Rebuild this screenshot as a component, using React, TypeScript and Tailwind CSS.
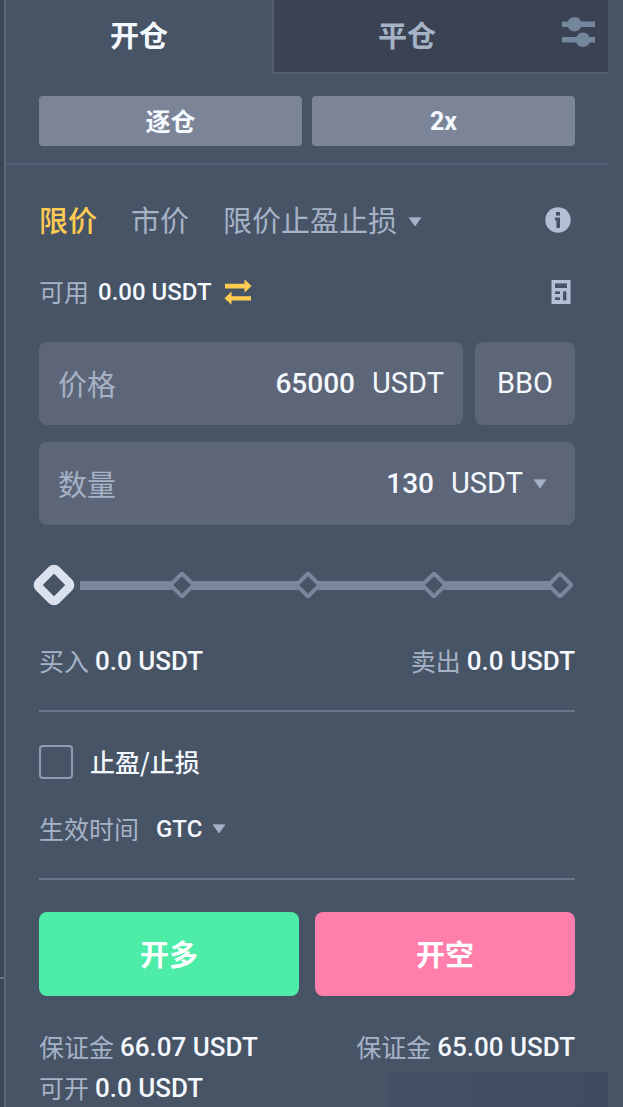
import { useState } from "react";
import clsx from "clsx";

const ORDER_TYPES = ["限价", "市价", "限价止盈止损"];
const STOPS = [0, 25, 50, 75, 100];

// CJK first, so Chinese labels get their own line metrics
const ZH = "font-['Noto_Sans_CJK_SC',sans-serif]";

function Caret({ className }: { className?: string }) {
  return (
    <svg width="14" height="10" viewBox="0 0 14 10" fill="currentColor" className={clsx("shrink-0 pointer-events-none", className)}>
      <path d="M1.2 0.8h11.6L7 9z" stroke="currentColor" strokeWidth="0.8" strokeLinejoin="round" />
    </svg>
  );
}

function SlidersIcon() {
  return (
    <svg width="33" height="32" viewBox="0 0 33 32" fill="currentColor">
      <rect x="0" y="5.5" width="33" height="5.5" />
      <circle cx="12.5" cy="8.2" r="7.2" />
      <rect x="0" y="21" width="33" height="5.5" />
      <circle cx="21" cy="23.8" r="7.2" />
    </svg>
  );
}

function InfoIcon() {
  return (
    <svg width="26" height="26" viewBox="0 0 26 26">
      <circle cx="13" cy="13" r="12.7" fill="currentColor" />
      <rect x="11" y="5" width="4" height="3.6" fill="#475466" />
      <path d="M10 10.6h5v10.4h-3.6v-7.6H10z" fill="#475466" />
    </svg>
  );
}

function CalculatorIcon() {
  return (
    <svg width="20" height="24" viewBox="0 0 20 24">
      <rect x="0.5" y="0" width="19" height="24" rx="0.5" fill="currentColor" />
      <g fill="#475466">
        <rect x="4" y="3.4" width="12" height="4.6" />
        <rect x="4" y="11.4" width="5" height="2.6" />
        <rect x="4" y="17.4" width="5" height="2.6" />
        <rect x="12" y="11.4" width="3.4" height="9" />
      </g>
    </svg>
  );
}

function TransferIcon() {
  return (
    <svg width="28" height="26" viewBox="0 0 28 26" fill="currentColor">
      <path d="M1 4.8h19.5V0.2L27.5 7l-7 6.8V9.4H1z" />
      <path d="M27 17.2H7.5v-4.6L0.5 19.2l7 6.6v-4.2H27z" />
    </svg>
  );
}

function Amount({ label, value }: { label: string; value: string }) {
  return (
    <div className="flex h-8 items-center gap-[6px]">
      <span className={clsx(ZH, "text-[25px] text-[#a6b2c6]")}>{label}</span>
      <span className="text-[26px] font-medium text-[#f4f8ff]">{value}</span>
    </div>
  );
}

function PercentSlider() {
  const [percent, setPercent] = useState(0);

  return (
    <div className="relative mt-[39px] h-[42px]">
      <div className="flex h-full items-center justify-between pr-[2px]">
        {STOPS.map((stop, i) => (
          <div key={stop} className={clsx("flex items-center", i > 0 && "flex-1")}>
            {i > 0 && <span className={clsx("h-[9px] flex-1 bg-[#7b869a]", i === 1 ? "ml-[11px] -mr-[3px]" : "-mx-[3px]")} />}
            {stop === percent ? (
              <svg width="42" height="42" viewBox="0 0 42 42" className="-mx-[6px] shrink-0">
                <rect x="8.75" y="8.75" width="24.5" height="24.5" rx="3" transform="rotate(45 21 21)" fill="#475466" stroke="#dbe2ed" strokeWidth="8.5" strokeLinejoin="round" />
              </svg>
            ) : (
              <svg width="26" height="28" viewBox="0 0 26 28" className="relative shrink-0">
                <rect x="4.8" y="5.8" width="16.4" height="16.4" rx="1" transform="rotate(45 13 14)" fill="#475466" stroke="#7b869a" strokeWidth="4" strokeLinejoin="round" />
              </svg>
            )}
          </div>
        ))}
      </div>
      <input
        type="range"
        aria-label="百分比"
        min={0}
        max={100}
        step={25}
        value={percent}
        onChange={(e) => setPercent(Number(e.target.value))}
        className="absolute inset-0 h-full w-full cursor-pointer opacity-0"
      />
    </div>
  );
}

export default function App() {
  const [tab, setTab] = useState("open");
  const [orderType, setOrderType] = useState("限价");
  const [price, setPrice] = useState("65000");
  const [size, setSize] = useState("130");
  const [tpsl, setTpsl] = useState(false);

  return (
    <div className="flex min-h-screen bg-[#475466] pr-[15px] font-[Roboto,'Noto_Sans_CJK_SC',sans-serif]">
      {/* Edge of the neighbouring panel */}
      <div className="flex w-[6px] shrink-0 flex-col border-r-2 border-[#5b6679] bg-[#3c4558]">
        <div className="h-[979px] border-b-2 border-[#6b768a]" />
      </div>

      <main className="relative min-w-0 flex-1">
        <div className="grid h-[74px] grid-cols-[266fr_336fr]" role="tablist">
          <button
            role="tab"
            aria-selected={tab === "open"}
            onClick={() => setTab("open")}
            className={clsx(ZH, "pb-[4px] text-[29px] font-bold text-[#f4f8ff]")}
          >
            开仓
          </button>
          <div className="flex items-center rounded-bl-[3px] border-b-2 border-l-2 border-[#525d70] bg-[#3a4253] pr-[13px]">
            <button
              role="tab"
              aria-selected={tab === "close"}
              onClick={() => setTab("close")}
              className={clsx(ZH, "h-full flex-1 pr-[22px] pb-[2px] text-[29px] font-bold text-[#a6b2c6]")}
            >
              平仓
            </button>
            <button aria-label="设置" className="pb-[8px] text-[#74869c]">
              <SlidersIcon />
            </button>
          </div>
        </div>

        <div className="grid grid-cols-2 gap-[10px] border-b-2 border-[#515d70] px-[33px] pt-[22px] pb-[17px]">
          <button className={clsx(ZH, "h-[50px] rounded-[4px] bg-[#7c8598] text-[25px] font-bold text-[#f4f8ff]")}>逐仓</button>
          <button className="h-[50px] rounded-[4px] bg-[#7c8598] pt-[2px] text-[25px] font-bold text-[#f4f8ff]">2x</button>
        </div>

        <div className="px-[33px] pt-[35px]">
          <div className="flex h-10 items-center gap-[34px] text-[29px]">
            {ORDER_TYPES.map((type) => (
              <button
                key={type}
                onClick={() => setOrderType(type)}
                className={clsx(
                  ZH,
                  "flex items-center gap-[11px] whitespace-nowrap",
                  type === orderType ? "font-medium text-[#ffcb52]" : "text-[#a6b2c6]"
                )}
              >
                {type}
                {type === "限价止盈止损" && <Caret className="mt-[4px]" />}
              </button>
            ))}
            <button aria-label="说明" className="mr-[4px] ml-auto text-[#b3c0d4]">
              <InfoIcon />
            </button>
          </div>

          <div className="mt-[36px] flex h-8 items-center gap-[9px]">
            <span className={clsx(ZH, "text-[25px] text-[#a6b2c6]")}>可用</span>
            <span className="text-[24px] font-medium text-[#f4f8ff]">0.00 USDT</span>
            <button aria-label="划转" className="ml-[3px] text-[#ffcb52]">
              <TransferIcon />
            </button>
            <button aria-label="计算器" className="mr-[4px] ml-auto text-[#b3c0d4]">
              <CalculatorIcon />
            </button>
          </div>

          <div className="mt-[34px] flex gap-[12px] text-[29px] text-[#f4f8ff]">
            <div className="flex h-[83px] min-w-0 flex-1 items-center rounded-[8px] bg-[#5d6678] px-[19px]">
              <label htmlFor="price" className={clsx(ZH, "shrink-0 text-[#a6b2c6]")}>价格</label>
              <input
                id="price"
                value={price}
                onChange={(e) => setPrice(e.target.value)}
                className="min-w-0 flex-1 bg-transparent text-right text-[28px] font-medium outline-none"
              />
              <span className="ml-[17px]">USDT</span>
            </div>
            <button className="w-[100px] rounded-[8px] bg-[#5d6678]">BBO</button>
          </div>

          <div className="mt-[17px] flex h-[83px] items-center rounded-[8px] bg-[#5d6678] pr-[28px] pl-[19px] text-[29px] text-[#f4f8ff]">
            <label htmlFor="size" className={clsx(ZH, "shrink-0 text-[#a6b2c6]")}>数量</label>
            <input
              id="size"
              value={size}
              onChange={(e) => setSize(e.target.value)}
              className="min-w-0 flex-1 bg-transparent text-right text-[28px] font-medium outline-none"
            />
            <select aria-label="单位" className="ml-[17px] appearance-none bg-transparent outline-none">
              <option>USDT</option>
            </select>
            <Caret className="ml-[10px] text-[#a6b2c6]" />
          </div>

          <PercentSlider />

          <div className="mt-[39px] flex justify-between">
            <Amount label="买入" value="0.0 USDT" />
            <Amount label="卖出" value="0.0 USDT" />
          </div>

          <hr className="mt-[33px] border-t-2 border-[#687488]" />

          <label className={clsx(ZH, "mt-[33px] flex h-[34px] items-center gap-[17px] text-[25px] font-medium text-[#f4f8ff]")}>
            <input
              type="checkbox"
              checked={tpsl}
              onChange={(e) => setTpsl(e.target.checked)}
              className="size-[34px] appearance-none rounded-[4px] border-2 border-[#8e9bb0] checked:bg-[#ffcb52]"
            />
            止盈/止损
          </label>

          <div className="mt-[34px] flex h-8 items-center">
            <label htmlFor="tif" className={clsx(ZH, "text-[25px] text-[#a6b2c6]")}>生效时间</label>
            <select id="tif" className="ml-[17px] appearance-none bg-transparent text-[24px] font-medium text-[#f4f8ff] outline-none">
              <option>GTC</option>
            </select>
            <Caret className="ml-[9px] text-[#a6b2c6]" />
          </div>

          <hr className="mt-[33px] border-t-2 border-[#687488]" />

          <div className={clsx(ZH, "mt-[32px] grid grid-cols-2 gap-[16px] text-[29px] font-bold text-white")}>
            <button className="h-[84px] rounded-[8px] bg-[#4deda8]">开多</button>
            <button className="h-[84px] rounded-[8px] bg-[#ff7eab]">开空</button>
          </div>

          <div className="mt-[35px] flex justify-between">
            <Amount label="保证金" value="66.07 USDT" />
            <Amount label="保证金" value="65.00 USDT" />
          </div>
          <div className="mt-[9px]">
            <Amount label="可开" value="0.0 USDT" />
          </div>
        </div>

        {/* Faded patch in the bottom corner */}
        <div className="absolute right-0 bottom-0 h-[35px] w-[218px] bg-linear-to-r from-[#445064] to-[#3f4b61]" />
      </main>
    </div>
  );
}
